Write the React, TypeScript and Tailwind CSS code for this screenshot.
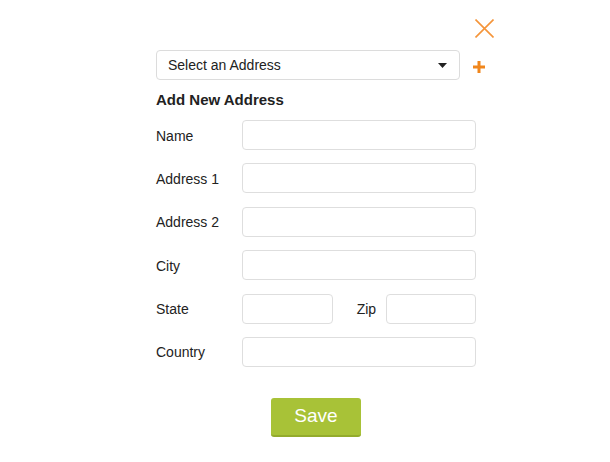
import { useState } from 'react';

const fields = ['Name', 'Address 1', 'Address 2', 'City'];

function TextInput({ className = '' }: { className?: string }) {
  return (
    <input
      type="text"
      className={`h-[30px] rounded-[4px] border border-[#dedede] bg-white px-2 text-[14px] outline-none ${className}`}
    />
  );
}

export default function App() {
  const [address, setAddress] = useState('Select an Address');

  return (
    <div className="min-h-[462px] w-[610px] bg-white font-['Liberation_Sans',Arial,sans-serif] text-[#222]">
      <div className="ml-[156px] w-[338px] pt-[19px]">
        {/* Close */}
        <div className="flex justify-end">
          <button className="h-[19px] w-[19px]">
            <svg width="19" height="19" viewBox="0 0 19 19">
              <path d="M0.5 0.5 L18.5 18.5 M18.5 0.5 L0.5 18.5" stroke="#f5953a" strokeWidth="1.6" fill="none" />
            </svg>
          </button>
        </div>

        {/* Address picker */}
        <div className="mt-[12px] flex items-center">
          <div className="flex h-[30px] w-[304px] items-center justify-between rounded-[4px] border border-[#dcdcdc] pl-[11px] pr-[12px] text-[14px]">
            <span className="pt-px">{address}</span>
            <svg width="9" height="5" viewBox="0 0 9 5" onClick={() => setAddress('Select an Address')}>
              <path d="M0 0 H9 L4.5 5 Z" fill="#222" />
            </svg>
          </div>
          <button className="ml-[13px] mt-[3px]">
            <svg width="12" height="12" viewBox="0 0 12 12">
              <path d="M6 0 V12 M0 6 H12" stroke="#f0861c" strokeWidth="3" fill="none" />
            </svg>
          </button>
        </div>

        <h2 className="mt-[11px] text-[15px] font-bold leading-[18px]">Add New Address</h2>

        {/* Form */}
        <div className="mt-[11px] flex w-[320px] flex-col gap-[13.4px]">
          {fields.map((f) => (
            <div key={f} className="flex items-center">
              <label className="w-[86px] pt-[2px] text-[14px]">{f}</label>
              <TextInput className="w-[234px]" />
            </div>
          ))}
          <div className="flex items-center">
            <label className="w-[86px] pt-[2px] text-[14px]">State</label>
            <TextInput className="w-[91px]" />
            <label className="ml-[24px] w-[30px] pt-[2px] text-[14px]">Zip</label>
            <TextInput className="ml-[-0.5px] w-[90px]" />
          </div>
          <div className="flex items-center">
            <label className="w-[86px] pt-[2px] text-[14px]">Country</label>
            <TextInput className="w-[234px]" />
          </div>
        </div>

        <div className="mt-[31px] flex w-[320px] justify-center">
          <button className="h-[39px] w-[90px] rounded-[3px] border-b-2 border-[#93ab2c] bg-[#a8c237] text-[19px] text-white">
            Save
          </button>
        </div>
      </div>
    </div>
  );
}
